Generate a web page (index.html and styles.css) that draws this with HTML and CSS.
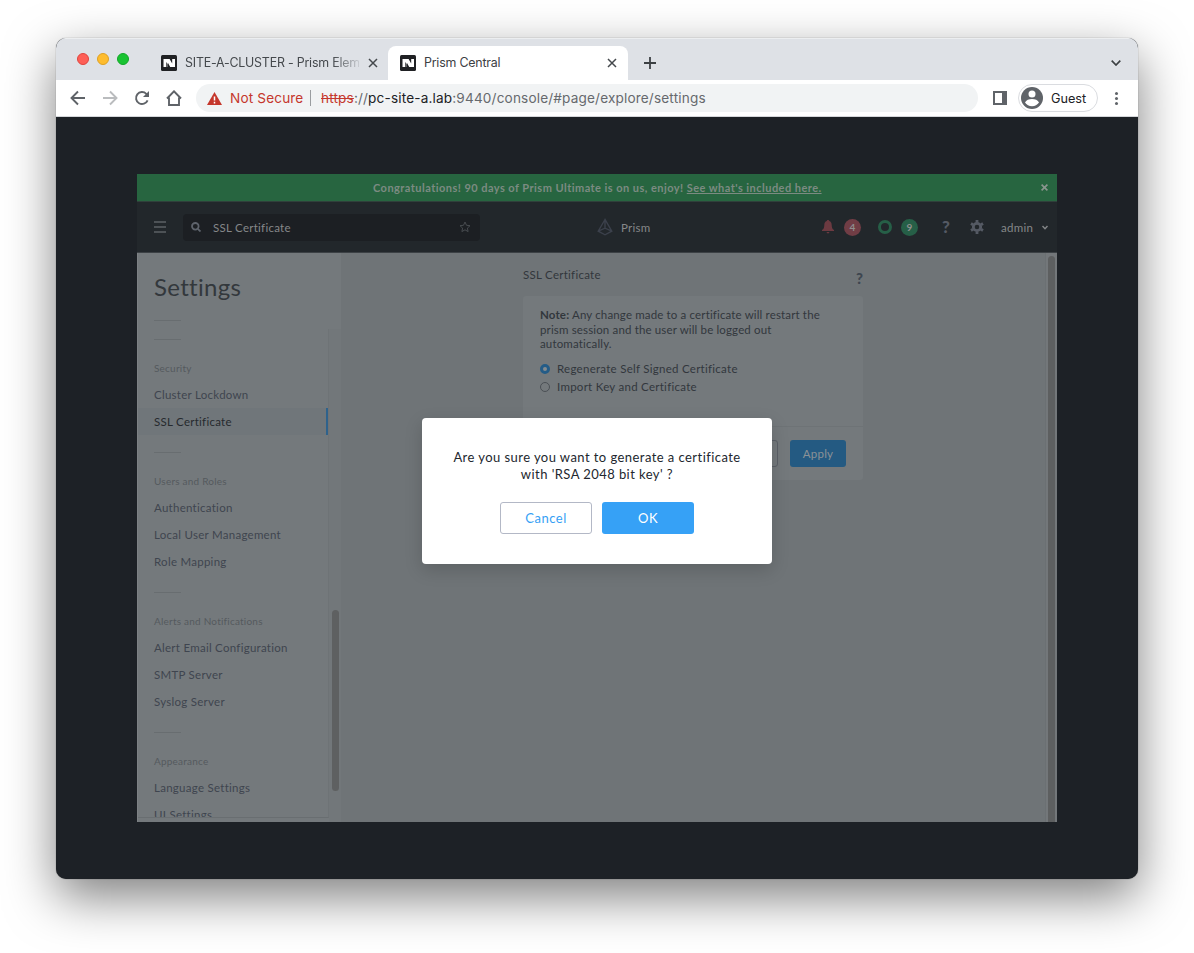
FILE: index.html
```html
<!DOCTYPE html>
<html lang="en">
<head>
<meta charset="utf-8">
<title>Prism Central</title>
<link rel="stylesheet" href="styles.css">
</head>
<body>
<div class="window">
  <div class="tabstrip">
    <div class="lights"><i class="light red"></i><i class="light amber"></i><i class="light green"></i></div>
    <div class="tab">
      <svg class="fav" viewBox="0 0 16 16"><rect width="16" height="16" rx="1.500" fill="#202124"/><path d="M2.500 4h2.500v8H2.500zM11.200 4h2.800v8h-2.800zM5 4h3.600l2.600 4.500V12H9.200L7 8v4H5z" fill="#fff"/><path d="M5.300 7v5h1.400V9z" fill="#202124"/></svg>
      <span class="tab-title fade">SITE-A-CLUSTER - Prism Elem</span>
      <svg class="close" viewBox="0 0 10 10"><path d="M1 1l8 8M9 1L1 9"/></svg>
    </div>
    <div class="tab active">
      <svg class="fav" viewBox="0 0 16 16"><rect width="16" height="16" rx="1.500" fill="#202124"/><path d="M2.500 4h2.500v8H2.500zM11.200 4h2.800v8h-2.800zM5 4h3.600l2.600 4.500V12H9.200L7 8v4H5z" fill="#fff"/><path d="M5.300 7v5h1.400V9z" fill="#202124"/></svg>
      <span class="tab-title">Prism Central</span>
      <svg class="close" viewBox="0 0 10 10"><path d="M1 1l8 8M9 1L1 9"/></svg>
    </div>
    <svg class="plus" viewBox="0 0 12 12"><path d="M6 0v12M0 6h12"/></svg>
    <svg class="chev" viewBox="0 0 10 6"><path d="M.7.700L5 5 9.300.700"/></svg>
  </div>
  <div class="toolbar">
    <svg class="nav" viewBox="0 0 16 16"><path d="M15 8H2M8 1.500L1.500 8 8 14.500"/></svg>
    <svg class="nav off" viewBox="0 0 16 16"><path d="M1 8h13M8 1.500L14.500 8 8 14.500"/></svg>
    <svg class="nav" viewBox="0 0 16 16"><path d="M13.600 10.300a6 6 0 1 1-1.300-6.500L14 5.500"/><path d="M15 1v6H9z" class="solid"/></svg>
    <svg class="nav" viewBox="0 0 16 16"><path d="M1 8.500L8 1.300l7 7.200M3 7.500V15h10V7.500"/></svg>
    <div class="omnibox">
      <svg class="warn" viewBox="0 0 15 13"><path d="M7.500 0L15 13H0z" fill="#c5372c"/><path d="M7.500 4.500v4M7.500 9.800v1.600" stroke="#fff" stroke-width="1.500"/></svg>
      <span class="notsecure">Not Secure</span><i class="bar"></i>
      <span class="url"><s>https</s>://<b>pc-site-a.lab</b>:9440/console/#page/explore/settings</span>
    </div>
    <svg class="panel" viewBox="0 0 14 14"><path d="M0 0h14v14H0zM2 2v10h7V2z" fill="#5f6368" fill-rule="evenodd"/></svg>
    <div class="guest">
      <svg viewBox="0 0 22 22"><circle cx="11" cy="11" r="11" fill="#5f6368"/><circle cx="11" cy="7" r="3.500" fill="#fff"/><path d="M4 15.500c1-2.400 4-3.500 7-3.500s6 1.100 7 3.500c-1.600 2.300-4 3.700-7 3.700s-5.400-1.400-7-3.700z" fill="#fff"/></svg>
      <span>Guest</span>
    </div>
    <div class="dots"><i></i><i></i><i></i></div>
  </div>
  <div class="viewport">
    <div class="app">
      <div class="banner"><span class="congrats">Congratulations! 90 days of Prism Ultimate is on us, enjoy! <u>See what's included here.</u></span>
        <svg class="bclose" viewBox="0 0 6 6"><path d="M.5.500l5 5M5.500.500l-5 5"/></svg></div>
      <div class="header">
        <div class="burger"><i></i><i></i><i></i></div>
        <div class="search">
          <svg class="mag" viewBox="0 0 10 10"><circle cx="4.300" cy="4.300" r="3.300"/><path d="M6.800 6.800L9.500 9.500"/></svg>
          <span>SSL Certificate</span>
          <svg class="star" viewBox="0 0 12 12"><path d="M6 1l1.500 3.300 3.500.4-2.600 2.400.7 3.500L6 8.800l-3.100 1.800.7-3.500L1 4.700l3.500-.4z"/></svg>
        </div>
        <div class="brand">
          <svg viewBox="0 0 16 18"><path d="M8 1.500L1.200 13.200 8 16.800l6.800-3.600zM8 1.500v9M1.200 13.200L8 10.200l6.800 3"/></svg>
          <span>Prism</span>
        </div>
        <div class="status">
          <svg class="bell" viewBox="0 0 12 14"><path d="M6 0c.8 0 1.200.5 1.200 1.100C9 1.600 9.600 3 9.700 5c.1 2.800.6 4 2.300 5v1H0v-1c1.700-1 2.200-2.200 2.300-5 .1-2 .7-3.400 2.500-3.900C4.800.500 5.200 0 6 0zM4.300 12h3.400L6 13.800z" fill="#6c3a41"/></svg>
          <b class="badge alert">4</b>
          <i class="ring"></i>
          <b class="badge ok">9</b>
          <b class="q">?</b>
          <svg class="gear" viewBox="0 0 14 14"><circle cx="7" cy="7" r="3.700" fill="none" stroke="#555a64" stroke-width="2.800"/><path d="M7 0v2.500M7 11.500V14M1 3.500l2 1.200M11 9.300l2 1.200M1 10.500l2-1.200M11 4.700l2-1.200" stroke="#555a64" stroke-width="2.800"/></svg>
          <span class="admin">admin</span>
          <svg class="caret" viewBox="0 0 6 4"><path d="M.5.500L3 3.200 5.500.500"/></svg>
        </div>
      </div>
      <div class="body">
        <div class="sidebar">
          <div class="side-head"><h1>Settings</h1><i class="rule"></i></div>
          <div class="side-scroll">
            <div class="list">
              <div class="group"><i class="rule"></i><h2>Security</h2><a>Cluster Lockdown</a><a class="selected">SSL Certificate</a></div>
              <div class="group"><i class="rule"></i><h2>Users and Roles</h2><a>Authentication</a><a>Local User Management</a><a>Role Mapping</a></div>
              <div class="group"><i class="rule"></i><h2>Alerts and Notifications</h2><a>Alert Email Configuration</a><a>SMTP Server</a><a>Syslog Server</a></div>
              <div class="group"><i class="rule"></i><h2>Appearance</h2><a>Language Settings</a><a>UI Settings</a></div>
            </div>
            <div class="track"><i class="thumb"></i></div>
          </div>
        </div>
        <div class="main">
          <div class="section">
            <div class="title"><span>SSL Certificate</span><b>?</b></div>
            <div class="card">
              <div class="card-body">
                <p><b>Note:</b> Any change made to a certificate will restart the<br>prism session and the user will be logged out<br>automatically.</p>
                <label class="opt"><i class="radio on"></i><span>Regenerate Self Signed Certificate</span></label>
                <label class="opt"><i class="radio"></i><span>Import Key and Certificate</span></label>
              </div>
              <div class="card-foot"><div class="btn ghost"></div><div class="btn apply">Apply</div></div>
            </div>
          </div>
        </div>
        <div class="maintrack"><i></i></div>
      </div>
    </div>
    <div class="modal">
      <p>Are you sure you want to generate a certificate<br>with 'RSA 2048 bit key' ?</p>
      <div class="actions"><div class="mbtn cancel">Cancel</div><div class="mbtn okay">OK</div></div>
    </div>
  </div>
</div>
</body>
</html>
```
FILE: styles.css
```css
* { box-sizing: border-box; }
body { margin: 0; padding: 38px 56px; background: #fff; height: 953px; overflow: hidden; font-family: Lato, "Open Sans", sans-serif; }
i { display: block; flex: none; }
svg { display: block; flex: none; }
.window { width: 1082px; height: 841px; border-radius: 10px; overflow: hidden; display: flex; flex-direction: column; box-shadow: 0 0 1px rgba(0,0,0,.6), 0 18px 50px rgba(0,0,0,.5); background: #1d2126; }

/* Tab strip */
.tabstrip { height: 42px; flex: none; background: #dee1e6; border-top: 1px solid #eceef0; display: flex; align-items: flex-end; padding: 0 17px 0 21px; font: 12.400px Inter, sans-serif; letter-spacing: -.2px; }
.lights { display: flex; gap: 8px; align-self: center; margin: 0 21px 2px 0; }
.light { width: 12px; height: 12px; border-radius: 50%; }
.red { background: #fe5f57; border: 1px solid #e0443e; }
.amber { background: #febc2e; border: 1px solid #dea123; }
.green { background: #19c332; border: 1px solid #12a728; }
.tab { height: 34px; width: 238px; display: flex; align-items: center; padding: 0 10px 0 11px; color: #45494d; }
.tab + .tab { width: 240px; padding-left: 12px; padding-right: 11px; }
.tab.active { background: #fff; border-radius: 8px 8px 0 0; color: #3c4043; }
.fav { width: 16px; height: 16px; margin-right: 8px; }
.tab-title { flex: 1; white-space: nowrap; line-height: 16px; padding-bottom: 1px; }
.fade { flex: none; width: 174px; margin-right: 9px; -webkit-mask-image: linear-gradient(90deg, #000 148px, transparent 178px); mask-image: linear-gradient(90deg, #000 148px, transparent 178px); }
.close { width: 10px; height: 10px; fill: none; stroke: #45494d; stroke-width: 1.500; }
.plus { width: 12px; height: 12px; margin: 0 0 11px 16px; fill: none; stroke: #3c4043; stroke-width: 1.800; }
.chev { width: 10px; height: 6px; margin: 0 0 14px auto; fill: none; stroke: #3c4043; stroke-width: 1.700; }

/* Toolbar */
.toolbar { height: 37px; flex: none; background: #fff; border-bottom: 1px solid #d5d7da; display: flex; align-items: center; padding: 0 20px 0 14px; font: 13.600px Inter, sans-serif; }
.nav { width: 16px; height: 16px; margin-right: 16px; fill: none; stroke: #5f6368; stroke-width: 1.900; }
.nav .solid { fill: #5f6368; stroke: none; }
.off { stroke: #babcbe; }
.omnibox { width: 782px; height: 28px; margin-left: -2px; border-radius: 14px; background: #f1f3f4; display: flex; align-items: center; padding-left: 11px; white-space: nowrap; }
.warn { width: 15px; height: 13px; margin-right: 8px; }
.notsecure { color: #c5372c; width: 74px; letter-spacing: .15px; }
.bar { width: 1px; height: 16px; background: #9a9da0; margin: 0 10px 0 6px; }
.url { color: #66696d; letter-spacing: .16px; }
.url s { color: #c5372c; }
.url b { font-weight: 400; color: #202124; }
.panel { width: 14px; height: 14px; margin: 0 11px 0 15px; }
.guest { width: 80px; height: 28px; border: 1px solid #dadce0; border-radius: 14px; display: flex; align-items: center; padding-left: 2px; gap: 8px; color: #202124; font-size: 12.700px; }
.guest svg { width: 22px; height: 22px; }
.dots { display: flex; flex-direction: column; gap: 2px; margin-left: auto; }
.dots i { width: 3px; height: 3px; border-radius: 50%; background: #5f6368; }

/* Console */
.viewport { flex: 1; position: relative; padding: 57px 81px; }
.app { width: 920px; height: 648px; display: flex; flex-direction: column; overflow: hidden; letter-spacing: .27px; font-size: 11.500px; }
.banner { height: 28px; flex: none; background: #276540; border-bottom: 1px solid #30403b; display: flex; align-items: center; justify-content: flex-end; padding-right: 9px; color: #7c8b82; font-weight: 700; font-size: 11px; letter-spacing: .46px; white-space: nowrap; }
.congrats { width: 449px; margin-right: 219px; }
.bclose { width: 7px; height: 7px; fill: none; stroke: #8a958e; stroke-width: 1.400; }
.header { height: 51px; flex: none; background: #22272b; display: flex; align-items: center; padding: 0 9px 0 17px; color: #858789; border-bottom: 1px solid #3c4145; }
.burger { display: flex; flex-direction: column; gap: 3px; margin-right: 17px; }
.burger i { width: 12px; height: 2px; background: #4d5256; }
.search { width: 297px; height: 27px; border-radius: 4px; background: #1c1f23; display: flex; align-items: center; padding: 0 9px 0 8px; }
.mag { width: 10px; height: 10px; margin-right: 12px; fill: none; stroke: #5e636c; stroke-width: 1.800; }
.star { width: 12px; height: 12px; margin-left: auto; fill: none; stroke: #484c50; stroke-width: 1; }
.brand { display: flex; align-items: center; gap: 8px; margin-left: 117px; width: 60px; }
.brand svg { width: 16px; height: 18px; fill: none; stroke: #3b404b; stroke-width: 1.400; }
.status { display: flex; align-items: center; margin-left: auto; }
.bell { width: 12px; height: 14px; }
.badge { width: 17px; height: 17px; border-radius: 50%; color: #8e8e8e; text-align: center; line-height: 17px; font-size: 10px; letter-spacing: 0; }
.alert { background: #703d45; margin: 0 17px 0 10px; }
.ok { background: #265f47; margin: 0 24px 0 9px; }
.ring { width: 14px; height: 14px; border-radius: 50%; border: 3.500px solid #265f47; }
.q { width: 9px; font-size: 17px; line-height: 16px; font-weight: 900; color: #555a64; letter-spacing: 0; }
.gear { width: 14px; height: 14px; margin: 0 17px 0 19px; }
.admin { width: 34px; }
.caret { width: 6px; height: 5px; margin-left: 7px; fill: none; stroke: #858789; stroke-width: 1.400; }

.body { flex: 1; min-height: 0; display: flex; background: #6f7477; color: #32373c; }
.sidebar { width: 204px; background: #74797c; display: flex; flex-direction: column; border-left: 1px solid #7d8184; }
.side-head { height: 76px; padding: 18px 0 0 16px; flex: none; }
h1 { margin: 0 0 18px; font-size: 24px; line-height: 31px; font-weight: 400; letter-spacing: .3px; color: #33383c; }
.rule { width: 27px; height: 1px; background: #686d70; }
.side-scroll { flex: 1; min-height: 0; display: flex; }
.list { width: 191px; height: 489px; overflow: hidden; border-right: 1px solid #6e7376; border-bottom: 1px solid #696e71; }
.group { padding-top: 17px; }
.group:first-child { padding-top: 10px; }
.group .rule { margin-left: 16px; }
h2 { margin: 15px 0 0 16px; height: 26px; line-height: 26px; font-size: 10px; font-weight: 400; color: #54595e; letter-spacing: .22px; }
.group a { display: block; height: 27px; line-height: 27px; padding-left: 16px; color: #3f454f; white-space: nowrap; }
.group a.selected { background: #70767a; color: #262a2e; border-right: 2px solid #2e628c; }
.track { flex: 1; padding: 281px 0 0 3px; background: #72777a; }
.thumb { width: 7px; height: 181px; border-radius: 4px; background: #5e6061; }
.main { flex: 1; padding: 11px 0 0 182px; }
.section { width: 340px; }
.title { display: flex; justify-content: space-between; height: 32px; line-height: 22px; }
.title b { font-size: 15px; line-height: 29px; font-weight: 900; color: #3e4650; letter-spacing: 0; }
.card { height: 184px; background: #74797c; border-radius: 3px; display: flex; flex-direction: column; }
.card-body { padding: 12px 17px 0; flex: 1; }
.card p { margin: 0 0 8px; line-height: 14.600px; white-space: nowrap; letter-spacing: .15px; }
.opt { display: flex; align-items: center; height: 18px; gap: 7px; }
.radio { width: 10px; height: 10px; border-radius: 50%; border: 1px solid #4b5055; }
.radio.on { border: 3.500px solid #245c87; background: #868b8e; }
.card-foot { height: 54px; border-top: 1px solid #6e7376; display: flex; justify-content: flex-end; gap: 12px; padding: 13px 17px 0; }
.btn { width: 56px; height: 27px; border-radius: 3px; }
.ghost { border: 1px solid #5b6067; }
.apply { background: #245a82; color: #8b9296; text-align: center; line-height: 28px; }
.maintrack { width: 12px; background: #73777a; border-left: 1px solid #6b7073; padding: 3px 0 0 2px; }
.maintrack i { width: 7px; height: 100%; border-radius: 4px 4px 0 0; background: #5d5f60; }

/* Confirmation dialog */
.modal { position: absolute; left: 366px; top: 301px; width: 350px; height: 146px; border-radius: 4px; background: #fff; box-shadow: 0 6px 18px rgba(0,0,0,.16); padding: 31px 0 0; }
.modal p { margin: 0; text-align: center; font-size: 13px; line-height: 17px; letter-spacing: .44px; color: #22272e; }
.actions { display: flex; justify-content: center; gap: 10px; margin-top: 19px; }
.mbtn { width: 92px; height: 32px; border-radius: 3px; line-height: 32px; text-align: center; font-size: 13px; letter-spacing: .5px; }
.cancel { border: 1px solid #b3b8c6; color: #369ff5; line-height: 31px; }
.okay { background: #36a1f6; color: #fff; }
```
